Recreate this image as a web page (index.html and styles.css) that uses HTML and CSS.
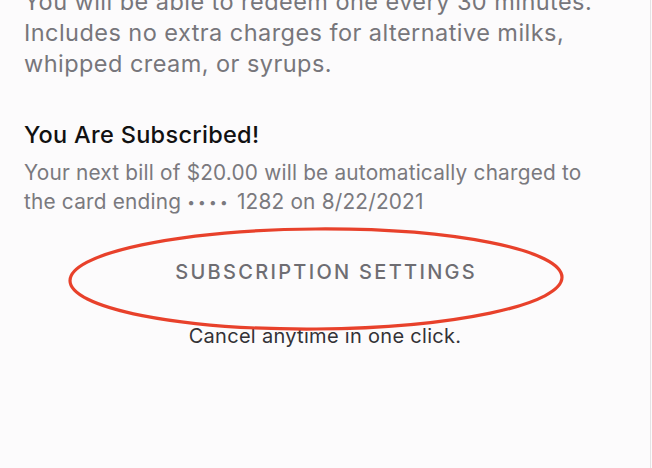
FILE: index.html
```html
<!DOCTYPE html>
<html>
<head>
<meta charset="utf-8">
<link rel="stylesheet" href="styles.css">
</head>
<body>
<div class="page">
  <p class="desc">You will be able to redeem one every 30 minutes. Includes no extra charges for alternative milks, whipped cream, or syrups.</p>
  <section class="status">
    <h2 class="status-title">You Are Subscribed!</h2>
    <p class="status-text">Your next bill of $20.00 will be automatically charged to the card ending <span class="dots">••••</span> 1282 on 8/22/2021</p>
  </section>
  <div class="settings">
    <button class="settings-btn">SUBSCRIPTION SETTINGS</button>
    <svg class="circle" width="500" height="108" viewBox="0 0 500 108">
      <ellipse cx="248" cy="53" rx="246" ry="50" fill="none" stroke="#e8412b" stroke-width="3.2" transform="rotate(-0.4 248 53)"/>
    </svg>
  </div>
  <p class="cancel">Cancel anytime in one click.</p>
</div>
</body>
</html>
```

FILE: styles.css
```css
html, body {
  margin: 0;
  padding: 0;
  background: #fcfbfc;
}
body {
  font-family: Inter, "Noto Sans", "Liberation Sans", sans-serif;
  overflow: hidden;
}
.page {
  width: 651px;
  height: 468px;
  box-sizing: border-box;
  border-right: 1px solid #e4e3e5;
  display: flex;
  flex-direction: column;
}
.desc {
  margin: -14px 0 0 24px;
  font-size: 23.5px;
  letter-spacing: 0.45px;
  line-height: 31px;
  color: #77767b;
  width: 590px;
}
.status {
  margin: 43px 0 0 24px;
}
.status-title {
  margin: 0;
  font-size: 23.5px;
  font-weight: 500;
  letter-spacing: 0.3px;
  line-height: 26px;
  color: #111;
}
.status-text {
  margin: 10px 0 0 0;
  font-size: 20.8px;
  letter-spacing: 0.2px;
  line-height: 29px;
  color: #7a797e;
  width: 572px;
}
.dots {
  font-size: 0.66em;
  letter-spacing: 3.2px;
  line-height: 1;
  vertical-align: 0.12em;
}
.settings {
  position: relative;
  margin-top: 23px;
  display: flex;
  justify-content: center;
}
.settings-btn {
  border: none;
  background: none;
  font-family: inherit;
  font-size: 20px;
  font-weight: 500;
  letter-spacing: 2.3px;
  color: #6e6d72;
  padding: 22px 0 22px 2.3px;
  line-height: 22px;
}
.circle {
  position: absolute;
  left: 68px;
  top: -13px;
}
.cancel {
  margin: 19px 0 0 0;
  text-align: center;
  font-size: 20px;
  letter-spacing: 0.3px;
  line-height: 24px;
  color: #333236;
}
```
